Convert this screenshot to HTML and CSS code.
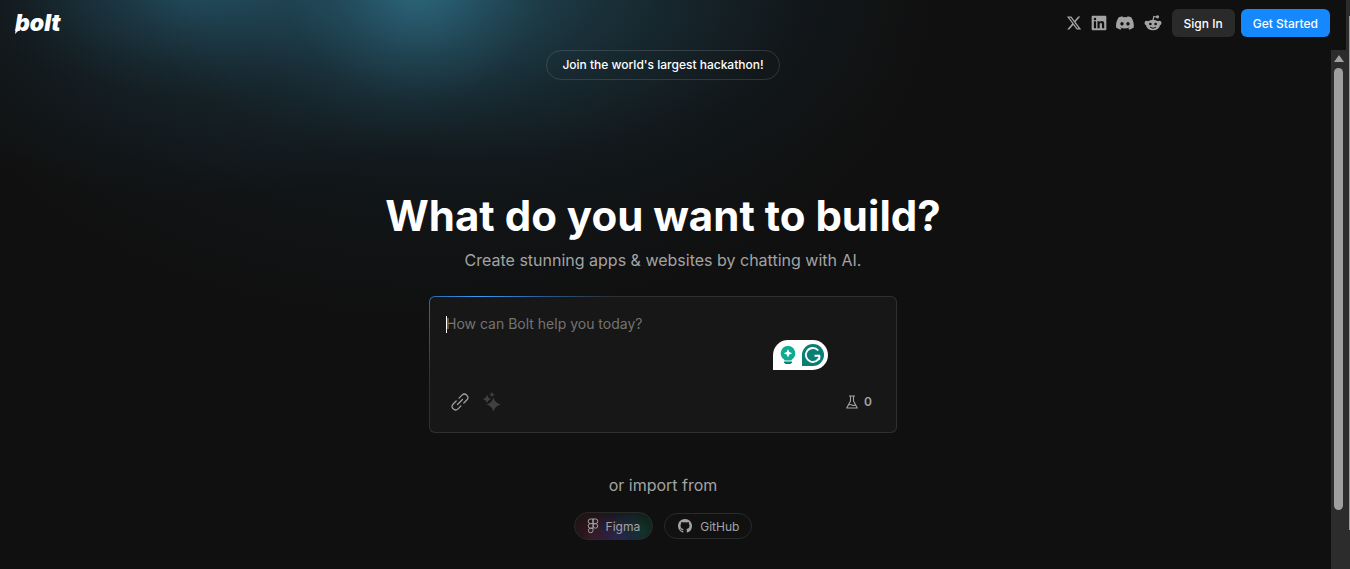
FILE: index.html
```html
<!DOCTYPE html>
<html lang="en">
<head>
    <meta charset="UTF-8">
    <meta name="viewport" content="width=device-width, initial-scale=1.0">
    <title>bolt</title>
    <link rel="stylesheet" href="styles.css">
</head>
<body>
    <div class="page">
        <header class="header">
            <a href="#" class="logo">bolt<svg class="logo-tail" width="5" height="6" viewBox="0 0 5 6"><path d="M1 0H5L3.500 2.500 0 6z" fill="#fff"/></svg></a>
            <nav class="nav">
                <a href="#" class="social" aria-label="X">
                    <svg width="16" height="16" viewBox="0 0 24 24"><path d="M18.2 2.3h3.300l-7.200 8.200 8.500 11.200h-6.700l-5.200-6.800-6 6.800H1.700l7.700-8.800L1.300 2.300h6.800l4.700 6.200zm-1.200 17.500h1.800L7.100 4.100h-2z" fill="currentColor"/></svg>
                </a>
                <a href="#" class="social" aria-label="LinkedIn">
                    <svg width="16" height="16" viewBox="0 0 24 24"><path fill-rule="evenodd" d="M2.500 1h19A1.500 1.500 0 0 1 23 2.500v19a1.500 1.500 0 0 1-1.500 1.500h-19A1.500 1.500 0 0 1 1 21.500v-19A1.500 1.500 0 0 1 2.500 1zM4.300 9.300v10.400h3.300V9.300zM5.950 4.200a1.900 1.900 0 1 0 0 3.800 1.900 1.900 0 0 0 0-3.800zM9.700 9.300v10.400H13v-5.500c0-2.900 3.500-3.100 3.500 0v5.500h3.300v-6.600c0-4.900-4.900-4.800-6.800-2.400V9.300z" fill="currentColor"/></svg>
                </a>
                <a href="#" class="social" aria-label="Discord">
                    <svg width="18" height="18" viewBox="0 0 24 24"><path fill-rule="evenodd" d="M20.300 4.400A19.800 19.800 0 0 0 15.400 2.900l-.6 1.300a18.300 18.300 0 0 0-5.500 0L8.600 2.900a19.700 19.700 0 0 0-4.900 1.500C.5 9-.3 13.600.1 18.100a19.900 19.900 0 0 0 6 3l1.200-2-1.900-.9.400-.3c3.900 1.800 8.200 1.800 12.100 0l.4.300-1.900.9 1.300 2a19.800 19.800 0 0 0 6-3c.5-5.200-.8-9.700-3.400-13.700zM8 15.300c-1.200 0-2.200-1.100-2.200-2.400S6.800 10.500 8 10.500s2.200 1.100 2.200 2.400-1 2.400-2.200 2.400zm8 0c-1.200 0-2.200-1.100-2.200-2.400s1-2.400 2.200-2.400 2.200 1.100 2.200 2.400-1 2.400-2.200 2.400z" fill="currentColor"/></svg>
                </a>
                <a href="#" class="social" aria-label="Reddit">
                    <svg width="20" height="18" viewBox="0 0 24 22">
                        <path d="M12 8l1-5 4.500 1" fill="none" stroke="currentColor" stroke-width="1.500"/>
                        <circle cx="17.500" cy="3.500" r="2" fill="currentColor"/>
                        <circle cx="4.300" cy="11" r="2.700" fill="currentColor"/>
                        <circle cx="19.700" cy="11" r="2.700" fill="currentColor"/>
                        <ellipse cx="12" cy="13.500" rx="8.500" ry="6.500" fill="currentColor"/>
                        <circle cx="8.800" cy="12.300" r="1.600" fill="#111"/>
                        <circle cx="15.200" cy="12.300" r="1.600" fill="#111"/>
                        <path d="M8.500 16.200q3.500 2.500 7 0" fill="none" stroke="#111" stroke-width="1.200"/>
                    </svg>
                </a>
                <button type="button" class="btn btn-dark">Sign In</button>
                <button type="button" class="btn btn-blue">Get Started</button>
            </nav>
        </header>

        <main class="main">
            <a href="#" class="banner">Join the world's largest hackathon!</a>
            <h1 class="title">What do you want to build?</h1>
            <p class="subtitle">Create stunning apps &amp; websites by chatting with AI.</p>

            <form class="prompt">
                <textarea class="prompt-input" aria-label="Prompt" placeholder="How can Bolt help you today?"></textarea>
                <span class="caret"></span>
                <div class="grammar">
                    <svg width="18" height="20" viewBox="0 0 18 20">
                        <path d="M9 1a7.300 7.300 0 0 0-4.500 13l1.300 1.500h6.400l1.300-1.500A7.300 7.300 0 0 0 9 1z" fill="#0fab91"/>
                        <path d="M9 4l1.300 3 3 1.300-3 1.300L9 12.600 7.700 9.600l-3-1.300 3-1.300z" fill="#fff"/>
                        <path d="M5 16.500h8v1l-1.500 1.500h-5L5 17.500z" fill="#0b8372"/>
                    </svg>
                    <svg width="22" height="22" viewBox="0 0 22 22">
                        <path d="M11 0a11 11 0 1 1 0 22H0V11A11 11 0 0 1 11 0z" fill="#087f72"/>
                        <path d="M16.300 6.500A7 7 0 1 0 17.800 12M12.500 11.800h5.500M17.200 11v4.800" fill="none" stroke="#fff" stroke-width="1.900"/>
                    </svg>
                </div>
                <div class="prompt-bar">
                    <button type="button" class="icon-btn" aria-label="Attach link">
                        <svg width="20" height="20" viewBox="0 0 20 20" fill="none" stroke="#a3a3a3" stroke-width="1.200" stroke-linecap="round"><path d="M7.500 12.500l5-5M9 6.200l3-3a3.350 3.350 0 0 1 4.800 4.800l-3 3M11 13.800l-3 3A3.350 3.350 0 0 1 3.200 12l3-3"/></svg>
                    </button>
                    <button type="button" class="icon-btn" aria-label="Enhance prompt">
                        <svg width="20" height="20" viewBox="0 0 20 20" fill="#404040"><path d="M11.500 5.500q1.500 5.500 7 7-5.500 1.500-7 7-1.500-5.500-7-7 5.500-1.500 7-7zM5 3q.9 3.100 4 4-3.100.9-4 4-.9-3.100-4-4 3.100-.9 4-4zM10 0q.6 2 2.600 2.600-2 .6-2.600 2.600-.6-2-2.600-2.600 2-.6 2.600-2.600z"/></svg>
                    </button>
                    <button type="button" class="flask">
                        <svg width="12" height="14" viewBox="0 0 12 14" fill="none" stroke="currentColor" stroke-width="1.100" stroke-linejoin="round"><path d="M3 1h6M4.500 1v5L.7 13h10.600L7.500 6V1M2.500 10q1.700-1 3.500 0t3.500 0"/></svg>
                        <span>0</span>
                    </button>
                </div>
            </form>

            <p class="import-label">or import from</p>
            <div class="imports">
                <button type="button" class="pill pill-figma">
                    <svg width="12" height="16" viewBox="0 0 12 16" fill="none" stroke="currentColor" stroke-width="1"><path d="M6 1H3.500a2.300 2.300 0 0 0 0 4.600H6zM6 1h2.500a2.300 2.300 0 0 1 0 4.600H6zM6 5.600H3.500a2.300 2.300 0 0 0 0 4.600H6zM6 10.200H3.500A2.300 2.300 0 1 0 6 12.500z"/><circle cx="8.400" cy="7.900" r="2.300"/></svg>
                    Figma
                </button>
                <button type="button" class="pill">
                    <svg width="16" height="16" viewBox="0 0 16 16" fill="currentColor"><path d="M8 1C4 1 1 4.100 1 8c0 3.100 2 5.700 4.800 6.600.4.100.5-.1.500-.3v-1.300c-2 .4-2.400-.9-2.400-.9-.3-.8-.8-1-.8-1-.6-.4.100-.4.100-.4.700 0 1.100.7 1.100.7.600 1.100 1.600.8 2 .6.100-.5.200-.8.400-.9-1.600-.2-3.200-.8-3.200-3.500 0-.8.300-1.400.7-1.900-.1-.2-.3-.9.100-1.800 0 0 .6-.2 1.900.7a6.600 6.600 0 0 1 3.600 0c1.300-.9 1.900-.7 1.900-.7.400.9.200 1.600.1 1.800.4.500.7 1.100.7 1.900 0 2.700-1.600 3.300-3.200 3.500.300.200.500.600.500 1.300v1.900c0 .2.100.4.500.3A7 7 0 0 0 15 8c0-3.900-3-7-7-7z"/></svg>
                    GitHub
                </button>
            </div>
        </main>
    </div>

    <div class="scrollbar">
        <span class="scroll-arrow"></span>
        <span class="scroll-thumb"></span>
    </div>
    <div class="outer-scrollbar">
        <span class="outer-thumb"></span>
    </div>
</body>
</html>
```
FILE: styles.css
```css
* {
    box-sizing: border-box;
}
body {
    margin: 0;
    min-height: 100vh;
    overflow: hidden;
    background-color: #101010;
    font-family: Inter, sans-serif;
    color: #fff;
}
button {
    font-family: inherit;
    cursor: pointer;
}
a {
    color: inherit;
    text-decoration: none;
}
.page {
    min-height: 100vh;
    background:
        radial-gradient(ellipse 170px 150px at 415px -10px, rgba(52, 125, 152, 0.6), rgba(44, 105, 130, 0.28) 45%, rgba(36, 90, 115, 0.07) 75%, transparent),
        radial-gradient(ellipse 260px 110px at 210px -15px, rgba(40, 100, 125, 0.5), rgba(36, 88, 110, 0.22) 45%, rgba(32, 75, 95, 0.06) 75%, transparent),
        radial-gradient(ellipse 460px 240px at 470px -10px, rgba(42, 100, 120, 0.55), rgba(34, 80, 98, 0.3) 42%, rgba(28, 58, 72, 0.1) 72%, transparent),
        radial-gradient(ellipse 320px 200px at 190px 0, rgba(38, 80, 98, 0.45), rgba(30, 60, 74, 0.22) 50%, transparent),
        radial-gradient(ellipse 520px 330px at 430px 0, rgba(24, 42, 52, 0.45), rgba(20, 34, 42, 0.25) 55%, transparent),
        #101010;
}
.header {
    display: flex;
    align-items: center;
    justify-content: space-between;
    height: 46px;
    padding: 0 20px 0 15px;
}
.logo {
    position: relative;
    font-size: 23px;
    line-height: 28px;
    font-weight: 900;
    font-style: italic;
}
.logo-tail {
    position: absolute;
    bottom: 3px;
    left: 0;
}
.nav {
    display: flex;
    align-items: center;
    gap: 6px;
}
.social {
    display: flex;
    margin-right: 3px;
    color: #a3a3a3;
}
.btn {
    height: 28px;
    padding: 0 12px;
    border: 0;
    border-radius: 6px;
    font-size: 12px;
    font-weight: 500;
    color: #fff;
}
.btn-dark {
    background-color: #2a2a2a;
}
.btn-blue {
    background-color: #1488fc;
}
.main {
    display: flex;
    flex-direction: column;
    align-items: center;
    padding: 4px 24px 0 0;
}
.banner {
    padding: 6px 15px;
    border: 1px solid rgba(255, 255, 255, 0.13);
    border-radius: 15px;
    font-size: 12px;
    line-height: 16px;
    font-weight: 500;
}
.title {
    margin: 108px 0 0;
    font-size: 42px;
    line-height: 56px;
    font-weight: 700;
}
.subtitle {
    margin: 4px 0 0;
    font-size: 16px;
    line-height: 24px;
    color: #a3a3a3;
}
.prompt {
    position: relative;
    width: 468px;
    max-width: 100%;
    margin-top: 24px;
    padding: 16px 16px 14px;
    border: 1px solid transparent;
    border-radius: 6px;
    background:
        linear-gradient(#171717, #171717) padding-box,
        radial-gradient(ellipse 130px 90px at 50px 0, #3a9bf5, rgba(32, 120, 215, 0.6) 50%, transparent) border-box,
        linear-gradient(#303030, #303030) border-box;
}
.prompt-input {
    display: block;
    width: 100%;
    height: 72px;
    padding: 0;
    border: 0;
    outline: 0;
    resize: none;
    background: transparent;
    font-family: inherit;
    font-size: 14px;
    line-height: 22px;
    color: #fff;
}
.prompt-input::placeholder {
    color: #737373;
}
.caret {
    position: absolute;
    top: 19px;
    left: 16px;
    width: 1px;
    height: 17px;
    background-color: #fff;
}
.grammar {
    position: absolute;
    top: 43px;
    right: 68px;
    display: flex;
    align-items: center;
    gap: 5px;
    height: 30px;
    padding: 0 4px 0 6px;
    border-radius: 15px 15px 15px 0;
    background-color: #fff;
}
.prompt-bar {
    display: flex;
    align-items: center;
    gap: 12px;
    height: 33px;
    padding: 0 8px 0 4px;
}
.icon-btn {
    display: flex;
    padding: 0;
    border: 0;
    background: transparent;
}
.flask {
    display: flex;
    align-items: center;
    gap: 6px;
    margin-left: auto;
    padding: 0;
    border: 0;
    background: transparent;
    font-size: 12px;
    font-weight: 600;
    color: #a3a3a3;
}
.import-label {
    margin: 40px 0 0;
    font-size: 16px;
    line-height: 24px;
    color: #a3a3a3;
}
.imports {
    display: flex;
    align-items: center;
    gap: 11px;
    margin-top: 15px;
}
.pill {
    display: flex;
    align-items: center;
    gap: 7px;
    height: 26px;
    padding: 0 12px;
    border: 1px solid #2a2a2a;
    border-radius: 14px;
    background-color: #111;
    font-size: 12px;
    color: #a3a3a3;
}
.pill-figma {
    height: 28px;
    background-image:
        radial-gradient(circle 38px at 22% 90%, rgba(130, 40, 60, 0.3), transparent),
        radial-gradient(circle 34px at 55% 105%, rgba(60, 60, 170, 0.4), transparent),
        radial-gradient(circle 36px at 88% 70%, rgba(15, 100, 65, 0.38), transparent);
}

/* scrollbars */
.scrollbar {
    position: fixed;
    top: 50px;
    right: 4px;
    bottom: 0;
    display: flex;
    flex-direction: column;
    align-items: center;
    width: 15px;
    padding-top: 5px;
    background-color: #2c2c2c;
}
.scroll-arrow {
    border: 5px solid transparent;
    border-top: 0;
    border-bottom: 7px solid #9f9f9f;
}
.scroll-thumb {
    width: 9px;
    height: 86%;
    margin-top: 6px;
    border-radius: 5px;
    background-color: #9f9f9f;
}
.outer-scrollbar {
    position: fixed;
    top: 0;
    right: 0;
    bottom: 0;
    display: flex;
    justify-content: flex-end;
    width: 4px;
    padding-top: 16px;
    background-color: #2c2c2c;
}
.outer-thumb {
    width: 1px;
    height: 93%;
    background-color: #9f9f9f;
}
```
